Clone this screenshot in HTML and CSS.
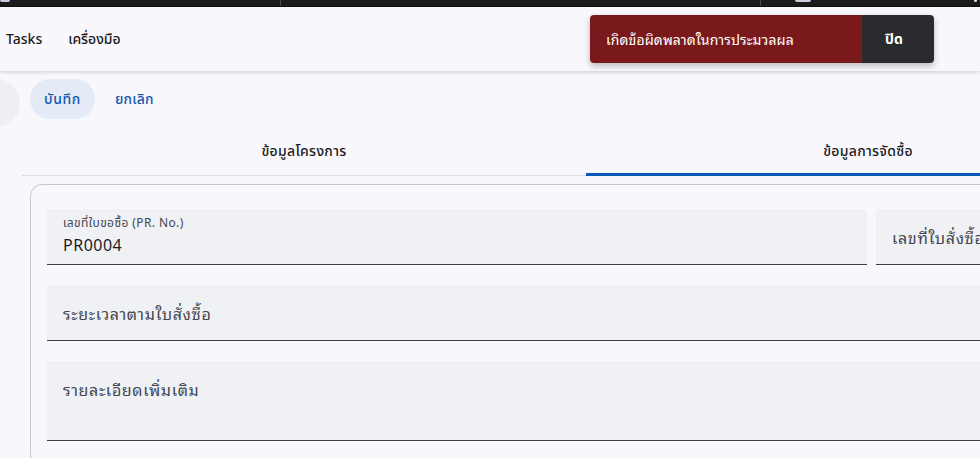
FILE: index.html
```html
<!DOCTYPE html>
<html lang="th">
<head>
<meta charset="utf-8">
<title>Tasks</title>
<link rel="stylesheet" href="styles.css">
</head>
<body>
<div class="strip">
  <span class="strip-bit strip-bit-left"></span>
  <span class="strip-sep sep-1"></span>
  <span class="strip-sep sep-2"></span>
  <span class="strip-bit strip-bit-mid"></span>
  <span class="strip-bit strip-bit-right"></span>
</div>
<header class="header">
  <nav class="nav">
    <a class="nav-item">Tasks</a>
    <a class="nav-item">เครื่องมือ</a>
  </nav>
</header>
<div class="toolbar">
  <span class="icon-btn"></span>
  <button class="btn btn-tonal">บันทึก</button>
  <button class="btn btn-text">ยกเลิก</button>
</div>
<div class="tabs">
  <div class="tab">ข้อมูลโครงการ</div>
  <div class="tab tab-active">ข้อมูลการจัดซื้อ</div>
</div>
<section class="card">
  <div class="row">
    <div class="field field-pr">
      <span class="field-label">เลขที่ใบขอซื้อ (PR. No.)</span>
      <span class="field-value">PR0004</span>
    </div>
    <div class="field field-po">
      <span class="field-placeholder">เลขที่ใบสั่งซื้อ</span>
    </div>
  </div>
  <div class="field">
    <span class="field-placeholder">ระยะเวลาตามใบสั่งซื้อ</span>
  </div>
  <div class="field field-area">
    <span class="field-placeholder">รายละเอียดเพิ่มเติม</span>
  </div>
</section>
<div class="toast">
  <div class="toast-msg">เกิดข้อผิดพลาดในการประมวลผล</div>
  <div class="toast-action">ปิด</div>
</div>
</body>
</html>
```

FILE: styles.css
```css
* { box-sizing: border-box; }
html, body {
  margin: 0;
  padding: 0;
  width: 980px;
  height: 458px;
  overflow: hidden;
  background: #f8f8fc;
  font-family: "Noto Sans", "Noto Sans Thai", sans-serif;
  color: #1c1b1f;
}
.strip {
  height: 7px;
  background: #1b1b1b;
  display: flex;
  align-items: flex-start;
  border-bottom: 1px solid #111;
}
.strip-sep {
  width: 1px;
  height: 6px;
  background: #4a4a4a;
}
.sep-1 { margin-left: 270px; }
.sep-2 { margin-left: 479px; }
.strip-bit {
  height: 2px;
  background: #c9cce0;
  border-radius: 0 0 3px 3px;
}
.strip-bit-left { width: 10px; }
.strip-bit-mid { width: 16px; margin-left: 34px; }
.strip-bit-right { width: 3px; margin-left: 163px; background: #ddd; }

.header {
  height: 64px;
  background: #f8f8fc;
  box-shadow: 0 1px 4px rgba(0,0,0,0.18);
  display: flex;
  align-items: center;
  padding-left: 6px;
  position: relative;
  z-index: 1;
}
.nav { display: flex; gap: 26px; }
.nav-item {
  font-size: 14px;
  font-weight: 500;
  color: #1c1b1f;
  line-height: 20px;
}

.toolbar {
  display: flex;
  align-items: flex-start;
  gap: 8px;
  margin-top: 8px;
  height: 49px;
}
.icon-btn {
  width: 48px;
  height: 48px;
  border-radius: 50%;
  background: #eeeff4;
  margin-left: -28px;
  margin-right: 2px;
}
.btn {
  height: 40px;
  border: none;
  border-radius: 20px;
  font-family: inherit;
  font-size: 14px;
  font-weight: 500;
  letter-spacing: 0.6px;
  color: #1557b0;
  padding: 0 14px;
  background: transparent;
}
.btn-tonal { background: #e4ebf7; }
.btn-text { padding: 0 12px; letter-spacing: 0.25px; }

.tabs {
  display: flex;
  margin-left: 22px;
  width: 1128px;
  height: 48px;
  border-bottom: 1px solid #dadce3;
}
.tab {
  flex: 1;
  display: flex;
  align-items: center;
  justify-content: center;
  font-size: 14px;
  font-weight: 500;
  letter-spacing: 0.3px;
  color: #1c1b1f;
  position: relative;
}
.tab-active::after {
  content: "";
  position: absolute;
  left: 0;
  right: 0;
  bottom: -1px;
  height: 3px;
  background: #0b57b8;
}

.card {
  margin-left: 30px;
  margin-top: 8px;
  width: 1700px;
  border: 1px solid #c5c7d1;
  border-radius: 12px;
  padding: 24px 16px;
  display: flex;
  flex-direction: column;
  gap: 20px;
}
.row { display: flex; gap: 9px; }
.field {
  height: 56px;
  background: #f0f1f5;
  border-radius: 4px 4px 0 0;
  border-bottom: 1px solid #3b3e46;
  padding: 0 16px;
  display: flex;
  flex-direction: column;
  justify-content: center;
}
.field-pr { width: 820px; justify-content: flex-start; padding-top: 6px; }
.field-po { flex: 1; }
.field-area { height: 80px; justify-content: flex-start; padding-top: 16px; }
.field-label {
  font-size: 12px;
  letter-spacing: 0.4px;
  color: #44474f;
  line-height: 16px;
}
.field-value {
  font-size: 16px;
  letter-spacing: 0.5px;
  color: #1c1b1f;
  line-height: 24px;
  margin-top: 2px;
}
.field-placeholder {
  font-family: "Noto Sans Thai Looped", "Noto Sans Thai", sans-serif;
  font-size: 16px;
  letter-spacing: 0.65px;
  color: #44474f;
  line-height: 24px;
}

.toast {
  position: absolute;
  left: 590px;
  top: 15px;
  width: 344px;
  height: 48px;
  display: flex;
  border-radius: 4px;
  overflow: hidden;
  box-shadow: 0 3px 6px rgba(0,0,0,0.25);
  z-index: 5;
}
.toast-msg {
  width: 272px;
  background: #7a191b;
  color: #fff;
  font-family: "Noto Sans Thai Looped", "Noto Sans Thai", sans-serif;
  font-size: 14px;
  letter-spacing: 0.1px;
  display: flex;
  align-items: center;
  padding-left: 16px;
  padding-bottom: 2px;
}
.toast-action {
  flex: 1;
  background: #2a2b2f;
  color: #fff;
  font-size: 14px;
  font-weight: 700;
  display: flex;
  align-items: center;
  padding-left: 23px;
}
```
